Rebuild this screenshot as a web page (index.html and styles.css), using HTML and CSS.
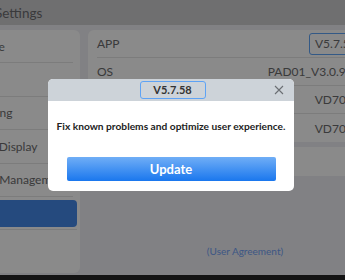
FILE: index.html
```html
<!DOCTYPE html>
<html lang="en">
<head>
<meta charset="utf-8">
<title>Settings</title>
<link rel="stylesheet" href="styles.css">
</head>
<body>
<div class="screen">
  <header class="topbar"><h1 class="title">Settings</h1></header>
  <main class="content">
    <nav class="menu">
      <div class="menu-item">Upgrade</div>
      <div class="menu-item">Wi-Fi</div>
      <div class="menu-item">Recording</div>
      <div class="menu-item">Screen Display</div>
      <div class="menu-item">Device Management</div>
      <div class="menu-item active"><span class="pill">About</span></div>
    </nav>
    <section class="side">
      <div class="card info">
        <div class="row"><span class="label">APP</span><span class="value boxed">V5.7.56</span></div>
        <div class="row"><span class="label">OS</span><span class="value">PAD01_V3.0.9_202405</span></div>
        <div class="row"><span class="label">MCU</span><span class="value">VD70-W_V1.2</span></div>
        <div class="row"><span class="label">DVR</span><span class="value">VD70-W_V1.2</span></div>
      </div>
      <div class="card extra"></div>
      <div class="agreement">(User Agreement)</div>
    </section>
  </main>
  <div class="bottom-bar"></div>
  <div class="overlay"></div>
  <div class="dialog">
    <div class="dialog-head">
      <span class="version">V5.7.58</span>
      <svg class="close" width="10" height="10" viewBox="0 0 10 10"><path d="M1 1 L9 9 M9 1 L1 9" stroke="#6b6f74" stroke-width="1.1" fill="none"/></svg>
    </div>
    <div class="dialog-body">
      <p class="message">Fix known problems and optimize user experience.</p>
      <button class="update">Update</button>
    </div>
  </div>
</div>
</body>
</html>
```
FILE: styles.css
```css
* { box-sizing: border-box; }
html, body { margin: 0; padding: 0; }
body {
  width: 345px;
  height: 280px;
  overflow: hidden;
  font-family: Lato, "Noto Sans", sans-serif;
  background: #000;
}
.screen {
  position: relative;
  width: 345px;
  height: 280px;
  overflow: hidden;
  display: flex;
  flex-direction: column;
  background: #ebebf0;
}
.topbar {
  height: 25px;
  flex: none;
  background: #cacacd;
  display: flex;
  align-items: center;
}
.title {
  margin: 0 0 0 -5px;
  font-size: 13.5px;
  font-weight: 400;
  color: #6a6a6e;
  line-height: 20px;
}
.content {
  height: 250px;
  flex: none;
  display: flex;
  gap: 8px;
  padding: 5px 0 2px 0;
}
.menu {
  flex: none;
  width: 140px;
  margin-left: -60px;
  background: #fbfbfb;
  border-radius: 6px;
  padding: 0 7px 0 0;
  display: flex;
  flex-direction: column;
}
.menu-item {
  height: 33.4px;
  border-bottom: 1px solid #e2e2e2;
  display: flex;
  align-items: center;
  padding-left: 20px;
  font-size: 12px;
  color: #6a6a6c;
  white-space: nowrap;
}
.menu-item.active {
  padding: 3px 0 2px 0;
  margin-right: -4px;
}
.pill {
  display: flex;
  align-items: center;
  width: 100%;
  height: 100%;
  background: #4487e6;
  border-radius: 4px;
  padding-left: 20px;
  color: #fff;
}
.side {
  flex: none;
  width: 314px;
  display: flex;
  flex-direction: column;
}
.card {
  background: #fbfbfb;
  border-radius: 6px;
}
.info {
  padding: 0 9px;
}
.row {
  height: 28px;
  display: flex;
  align-items: center;
  border-bottom: 1px solid #e2e2e2;
  font-size: 12px;
  color: #6a6a6c;
  white-space: nowrap;
}
.row:last-child { border-bottom: none; }
.value { margin-left: auto; }
.boxed {
  min-width: 84px;
  height: 22px;
  line-height: 19px;
  border: 1.5px solid #5ea3f5;
  border-radius: 3px;
  padding: 0 5px;
}
.extra {
  margin-top: 5px;
  height: 29px;
}
.agreement {
  margin-top: 68px;
  text-align: center;
  font-size: 10px;
  line-height: 14px;
  color: #6f9ef0;
}
.bottom-bar {
  flex: 1;
  background: #141414;
}
.overlay {
  position: absolute;
  inset: 0 0 5px 0;
  background: rgba(0, 0, 0, 0.45);
}
.dialog {
  position: absolute;
  left: 48px;
  top: 79px;
  width: 246px;
  height: 112px;
  background: #fff;
  border-radius: 5px;
  overflow: hidden;
  display: flex;
  flex-direction: column;
}
.dialog-head {
  position: relative;
  height: 22px;
  background: #cdd3d9;
  display: flex;
  justify-content: center;
  align-items: center;
}
.version {
  width: 66px;
  height: 18px;
  border: 1.5px solid #5ea3f5;
  border-radius: 3px;
  font-size: 11px;
  font-weight: 700;
  color: #333;
  text-align: center;
  line-height: 15px;
  margin-left: 3px;
}
.close {
  position: absolute;
  right: 10px;
  top: 6px;
}
.dialog-body {
  flex: 1;
  display: flex;
  flex-direction: column;
  align-items: center;
}
.message {
  margin: 18px 0 0 0;
  font-size: 10.2px;
  font-weight: 700;
  color: #222;
  line-height: 14px;
}
.update {
  margin-top: 24px;
  width: 209px;
  height: 24px;
  border: none;
  border-radius: 2px;
  background: linear-gradient(#70aef6, #1a77ee);
  color: #fff;
  font-family: Lato, "Noto Sans", sans-serif;
  font-size: 13px;
  font-weight: 700;
  padding: 0;
}
```
